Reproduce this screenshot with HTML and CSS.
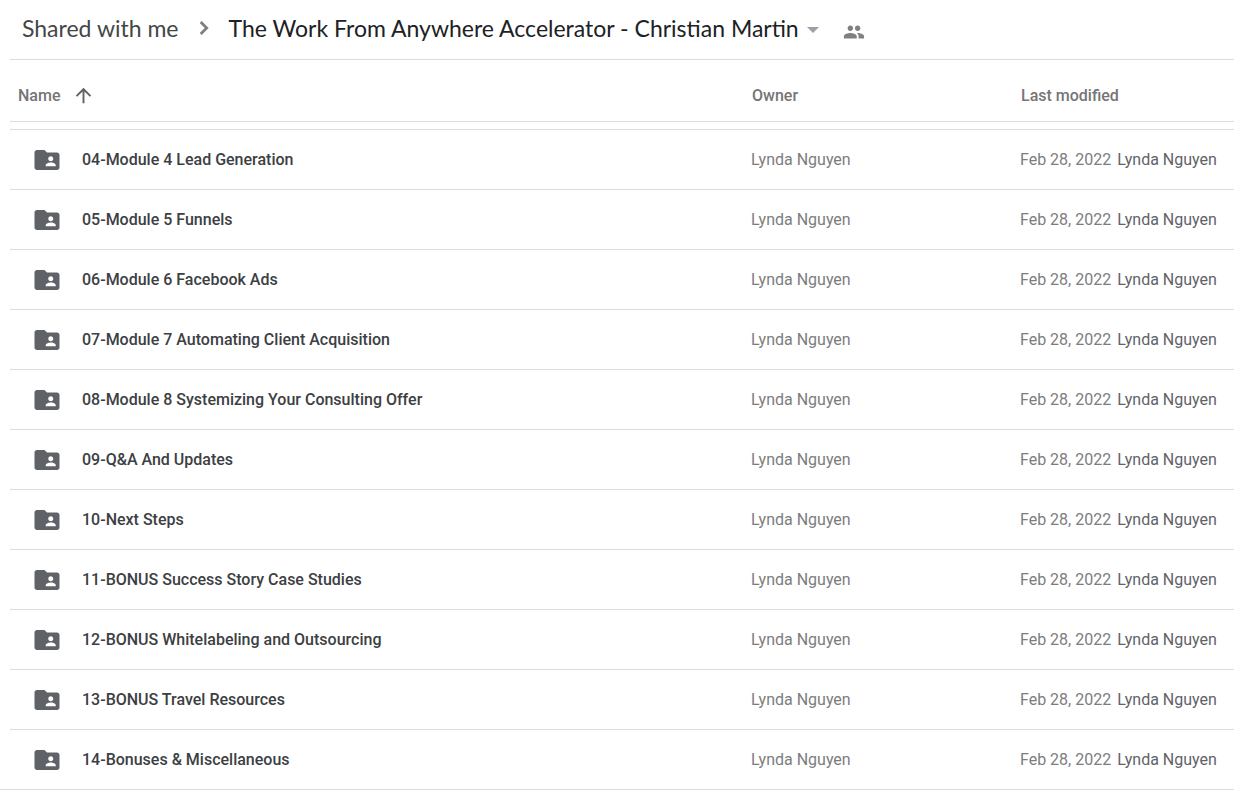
FILE: index.html
```html
<!DOCTYPE html>
<html lang="en">
<head>
    <meta charset="utf-8">
    <title>The Work From Anywhere Accelerator - Christian Martin</title>
    <link rel="stylesheet" href="styles.css">
</head>
<body>
    <svg class="sprite" aria-hidden="true">
        <symbol id="folder" viewBox="0 0 24 24">
            <path d="M20 6h-8l-2-2H4c-1.100 0-2 .9-2 2v12c0 1.100.9 2 2 2h16c1.100 0 2-.9 2-2V8c0-1.100-.9-2-2-2zm-5 3c1.100 0 2 .9 2 2s-.9 2-2 2-2-.9-2-2 .9-2 2-2zm4 8h-8v-1c0-1.330 2.670-2 4-2s4 .67 4 2v1z"/>
        </symbol>
    </svg>

    <header class="breadcrumbs">
        <a href="#" class="crumb">Shared with me</a>
        <svg class="chevron" viewBox="0 0 24 24" aria-hidden="true"><path d="M8.300 16.300L12.600 12 8.300 7.700 10 6l6 6-6 6z"/></svg>
        <button type="button" class="current">The Work From Anywhere Accelerator - Christian Martin<span class="caret"></span></button>
        <button type="button" class="people" aria-label="Manage people">
            <svg viewBox="0 0 24 24" aria-hidden="true"><path d="M16 11c1.660 0 2.990-1.340 2.990-3S17.660 5 16 5s-3 1.340-3 3 1.340 3 3 3zm-8 0c1.660 0 2.990-1.340 2.990-3S9.660 5 8 5 5 6.340 5 8s1.340 3 3 3zm0 2c-2.330 0-7 1.170-7 3.500V19h14v-2.500c0-2.330-4.670-3.500-7-3.500zm8 0c-.29 0-.62.020-.97.050 1.160.84 1.970 1.970 1.970 3.450V19h6v-2.500c0-2.330-4.670-3.500-7-3.500z"/></svg>
        </button>
    </header>

    <main>
        <table class="files">
            <thead>
                <tr>
                    <th class="name">
                        <button type="button" class="sort">Name
                            <svg viewBox="0 0 24 24" aria-hidden="true"><path d="M4 12l1.410 1.410L11 7.830V20h2V7.830l5.580 5.590L20 12l-8-8-8 8z"/></svg>
                        </button>
                    </th>
                    <th class="owner">Owner</th>
                    <th class="modified">Last modified</th>
                </tr>
            </thead>
            <tbody>
                <tr>
                    <td><div class="file"><svg><use href="#folder"/></svg>04-Module 4 Lead Generation</div></td>
                    <td>Lynda Nguyen</td>
                    <td>Feb 28, 2022 <span class="by">Lynda Nguyen</span></td>
                </tr>
                <tr>
                    <td><div class="file"><svg><use href="#folder"/></svg>05-Module 5 Funnels</div></td>
                    <td>Lynda Nguyen</td>
                    <td>Feb 28, 2022 <span class="by">Lynda Nguyen</span></td>
                </tr>
                <tr>
                    <td><div class="file"><svg><use href="#folder"/></svg>06-Module 6 Facebook Ads</div></td>
                    <td>Lynda Nguyen</td>
                    <td>Feb 28, 2022 <span class="by">Lynda Nguyen</span></td>
                </tr>
                <tr>
                    <td><div class="file"><svg><use href="#folder"/></svg>07-Module 7 Automating Client Acquisition</div></td>
                    <td>Lynda Nguyen</td>
                    <td>Feb 28, 2022 <span class="by">Lynda Nguyen</span></td>
                </tr>
                <tr>
                    <td><div class="file"><svg><use href="#folder"/></svg>08-Module 8 Systemizing Your Consulting Offer</div></td>
                    <td>Lynda Nguyen</td>
                    <td>Feb 28, 2022 <span class="by">Lynda Nguyen</span></td>
                </tr>
                <tr>
                    <td><div class="file"><svg><use href="#folder"/></svg>09-Q&amp;A And Updates</div></td>
                    <td>Lynda Nguyen</td>
                    <td>Feb 28, 2022 <span class="by">Lynda Nguyen</span></td>
                </tr>
                <tr>
                    <td><div class="file"><svg><use href="#folder"/></svg>10-Next Steps</div></td>
                    <td>Lynda Nguyen</td>
                    <td>Feb 28, 2022 <span class="by">Lynda Nguyen</span></td>
                </tr>
                <tr>
                    <td><div class="file"><svg><use href="#folder"/></svg>11-BONUS Success Story Case Studies</div></td>
                    <td>Lynda Nguyen</td>
                    <td>Feb 28, 2022 <span class="by">Lynda Nguyen</span></td>
                </tr>
                <tr>
                    <td><div class="file"><svg><use href="#folder"/></svg>12-BONUS Whitelabeling and Outsourcing</div></td>
                    <td>Lynda Nguyen</td>
                    <td>Feb 28, 2022 <span class="by">Lynda Nguyen</span></td>
                </tr>
                <tr>
                    <td><div class="file"><svg><use href="#folder"/></svg>13-BONUS Travel Resources</div></td>
                    <td>Lynda Nguyen</td>
                    <td>Feb 28, 2022 <span class="by">Lynda Nguyen</span></td>
                </tr>
                <tr>
                    <td><div class="file"><svg><use href="#folder"/></svg>14-Bonuses &amp; Miscellaneous</div></td>
                    <td>Lynda Nguyen</td>
                    <td>Feb 28, 2022 <span class="by">Lynda Nguyen</span></td>
                </tr>
            </tbody>
        </table>
    </main>
</body>
</html>
```
FILE: styles.css
```css
* {
    box-sizing: border-box;
}

body {
    margin: 0;
    background-color: #ffffff;
    color: #7d7d7d;
    font-family: Roboto, "Liberation Sans", sans-serif;
    font-size: 16px;
    line-height: 20px;
}

button {
    padding: 0;
    border: 0;
    background: none;
    color: inherit;
    font: inherit;
    cursor: pointer;
}

svg {
    flex: none;
    fill: #5f6368;
}

.sprite {
    display: none;
}

/* breadcrumbs */
.breadcrumbs {
    display: flex;
    align-items: center;
    height: 60px;
    margin-left: 10px;
    padding: 0 0 4px 12px;
    border-bottom: 1px solid #dadce0;
    font-family: "Google Sans", Lato, sans-serif;
    font-size: 23px;
    line-height: 28px;
    white-space: nowrap;
}

.crumb {
    color: #444746;
    text-decoration: none;
}

.chevron {
    width: 28px;
    height: 28px;
    margin: 0 11px;
    fill: #808080;
}

.current {
    display: flex;
    align-items: center;
    color: #202124;
}

.caret {
    margin: 4px 0 0 8px;
    border: 6px solid transparent;
    border-top-color: #9aa0a6;
    border-bottom: 0;
}

.people {
    margin-left: 24px;
    padding-top: 8px;
}

.people svg {
    display: block;
    width: 22px;
    height: 22px;
    fill: #808080;
}

/* file list */
main {
    border-bottom: 1px solid #dadce0;
}

.files {
    width: calc(100% - 10px);
    margin-left: 10px;
    border-spacing: 0;
    table-layout: fixed;
}

.files th {
    height: 62px;
    padding: 10px 0 0 1px;
    border-bottom: 1px solid #dadce0;
    color: #757575;
    font-weight: 500;
    text-align: left;
}

.files th.name {
    padding-left: 8px;
}

.owner {
    width: 269px;
}

.modified {
    width: 214px;
}

.sort {
    display: flex;
    align-items: center;
    gap: 12px;
}

.sort svg {
    width: 23px;
    height: 23px;
}

.files tbody::before {
    content: "";
    display: block;
    height: 7px;
}

.files td {
    height: 60px;
    padding: 0;
    border-top: 1px solid #dadce0;
    white-space: nowrap;
}

.file {
    display: flex;
    align-items: center;
    gap: 20px;
    padding-left: 22px;
    color: #3c4043;
    font-weight: 500;
}

.file svg {
    width: 30px;
    height: 30px;
}

.by {
    margin-left: 2px;
    color: #5f6368;
}
```
